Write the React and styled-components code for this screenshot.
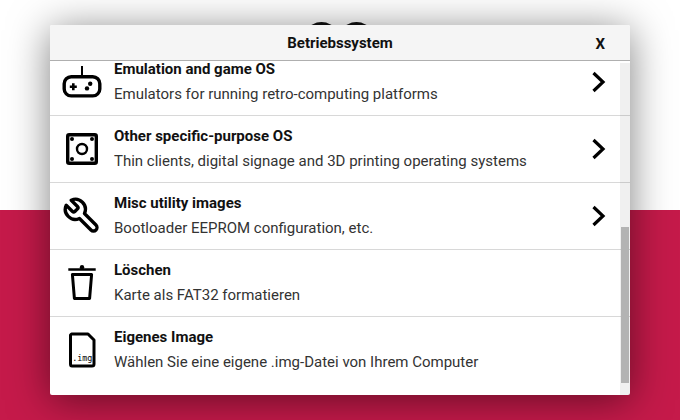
import React from 'react';
import styled, { createGlobalStyle } from 'styled-components';

const Global = createGlobalStyle`
html, body { margin:0; padding:0; height:100%; }
body { font-family:Roboto, "Liberation Sans", sans-serif; overflow:hidden; background:#fff; }
`;

const Page = styled.div`
position:relative;
width:680px;
height:420px;
display:flex;
flex-direction:column;
overflow:hidden;
`;
const Top = styled.div`
height:210px;
background:#fff;
display:flex;
justify-content:center;
padding-top:21px;
box-sizing:border-box;
`;
const Bottom = styled.div`
flex:1;
background:#c51a4a;
`;
const Overlay = styled.div`
position:absolute;
left:50px;
top:25px;
width:580px;
height:370px;
display:flex;
flex-direction:column;
background:#fff;
border-radius:2px;
box-shadow:0 5px 40px rgba(0,0,0,0.5);
overflow:hidden;
`;
const Header = styled.div`
height:36px;
flex:none;
box-sizing:border-box;
display:flex;
align-items:center;
justify-content:center;
position:relative;
background:#f5f5f5;
border-bottom:1px solid #afafaf;
font-size:15px;
font-weight:700;
color:#111;
`;
const Close = styled.span`
position:absolute;
right:25px;
top:10px;
font-size:15px;
font-weight:700;
line-height:18px;
color:#111;
`;
const Body = styled.div`
flex:1;
position:relative;
overflow:hidden;
`;
const List = styled.div`
margin-top:-12px;
`;
const Row = styled.div`
height:67px;
box-sizing:border-box;
display:flex;
align-items:flex-start;
border-bottom:${p => (p.$last ? 'none' : '1px solid #d8d8d8')};
`;
const IconBox = styled.div`
width:64px;
flex:none;
height:66px;
display:flex;
align-items:center;
justify-content:center;
color:#000;
`;
const Texts = styled.div`
flex:1;
padding-top:11px;
`;
const Title = styled.div`
font-size:15px;
line-height:18px;
font-weight:700;
color:#111;
`;
const Desc = styled.div`
margin-top:7px;
font-size:15px;
line-height:18px;
color:#333;
`;
const Arrow = styled.div`
width:39px;
flex:none;
height:66px;
display:flex;
align-items:center;
box-sizing:border-box;
`;
const Track = styled.div`
position:absolute;
right:0;
top:2px;
bottom:0;
width:10px;
background:rgba(0,0,0,0.06);
`;
const Thumb = styled.div`
position:absolute;
right:1px;
top:164px;
width:8px;
height:156px;
background:#b3b3b3;
`;

const Chevron = () => (
  <svg width="16" height="22" viewBox="0 0 16 22" fill="none" stroke="#000" strokeWidth="3.2">
    <path d="M2.5 2 L12 11 L2.5 20" />
  </svg>
);

const GameIcon = () => (
  <svg width="40" height="40" viewBox="0 0 40 40" fill="none" stroke="#000">
    <path d="M20 4 V14" strokeWidth="2" />
    <rect x="2.2" y="14.7" width="35.6" height="19.2" rx="7" strokeWidth="3.4" />
    <path d="M7.8 24.7 H14.8 M11.3 21.2 V28.2" strokeWidth="2.6" />
    <circle cx="28.2" cy="21.7" r="2.2" fill="#000" stroke="none" />
    <circle cx="25" cy="26.4" r="2.2" fill="#000" stroke="none" />
  </svg>
);

const BoardIcon = () => (
  <svg width="40" height="40" viewBox="0 0 40 40" fill="none" stroke="#000">
    <rect x="5.7" y="5.7" width="28.6" height="28.6" rx="1.5" strokeWidth="3.4" />
    <circle cx="20" cy="20" r="5" strokeWidth="2.4" />
    <circle cx="10" cy="10" r="2" fill="#000" stroke="none" />
    <circle cx="30" cy="10" r="2" fill="#000" stroke="none" />
    <circle cx="10" cy="30" r="2" fill="#000" stroke="none" />
    <circle cx="30" cy="30" r="2" fill="#000" stroke="none" />
  </svg>
);

const WrenchIcon = () => (
  <svg width="40" height="40" viewBox="0 0 24 24" fill="none" stroke="#000" strokeWidth="2" strokeLinejoin="round">
    <path
      transform="translate(24 0) scale(-1 1)"
      d="M14.7 6.3a1 1 0 0 0 0 1.4l1.6 1.6a1 1 0 0 0 1.4 0l3.77-3.77a6 6 0 0 1-7.94 7.94l-6.91 6.91a2.12 2.12 0 0 1-3-3l6.91-6.91a6 6 0 0 1 7.94-7.94l-3.76 3.76z"
    />
  </svg>
);

const TrashIcon = () => (
  <svg width="40" height="40" viewBox="0 0 40 40" fill="none" stroke="#000">
    <path d="M6.3 6.5 H33.7" strokeWidth="2.6" />
    <circle cx="20" cy="4.2" r="2.2" fill="#000" stroke="none" />
    <path d="M10.4 11.5 H29.6 L27.6 35.5 H12.4 Z" strokeWidth="3" strokeLinejoin="round" />
  </svg>
);

const ImgIcon = () => (
  <svg width="40" height="40" viewBox="0 0 40 40" fill="none">
    <path d="M9.5 4 H26 L32 10 V34 C32 35.5 31.5 36 30 36 H10 C9 36 8.5 35.5 8.5 34 V5 Z" stroke="#000" strokeWidth="3" strokeLinejoin="round" />
    <text x="20.3" y="30.5" textAnchor="middle" fontFamily="DejaVu Sans Mono, monospace" fontSize="8.4" fill="#000">.img</text>
  </svg>
);

const Logo = () => (
  <svg width="64" height="10" viewBox="0 0 64 10" overflow="visible">
    <ellipse cx="13.5" cy="9" rx="12" ry="8" fill="#111" />
    <ellipse cx="48.5" cy="9" rx="12" ry="8" fill="#111" />
  </svg>
);

const items = [
  { icon: <GameIcon />, title: 'Emulation and game OS', desc: 'Emulators for running retro-computing platforms', arrow: true },
  { icon: <BoardIcon />, title: 'Other specific-purpose OS', desc: 'Thin clients, digital signage and 3D printing operating systems', arrow: true },
  { icon: <WrenchIcon />, title: 'Misc utility images', desc: 'Bootloader EEPROM configuration, etc.', arrow: true },
  { icon: <TrashIcon />, title: 'Löschen', desc: 'Karte als FAT32 formatieren' },
  { icon: <ImgIcon />, title: 'Eigenes Image', desc: 'Wählen Sie eine eigene .img-Datei von Ihrem Computer', last: true },
];

export default function App() {
  return (
    <Page>
      <Global />
      <Top><Logo /></Top>
      <Bottom />
      <Overlay>
        <Header>
          Betriebssystem
          <Close>X</Close>
        </Header>
        <Body>
          <List>
            {items.map(item => (
              <Row key={item.title} $last={item.last}>
                <IconBox>{item.icon}</IconBox>
                <Texts>
                  <Title>{item.title}</Title>
                  <Desc>{item.desc}</Desc>
                </Texts>
                {item.arrow && <Arrow><Chevron /></Arrow>}
              </Row>
            ))}
          </List>
          <Track><Thumb /></Track>
        </Body>
      </Overlay>
    </Page>
  );
}
